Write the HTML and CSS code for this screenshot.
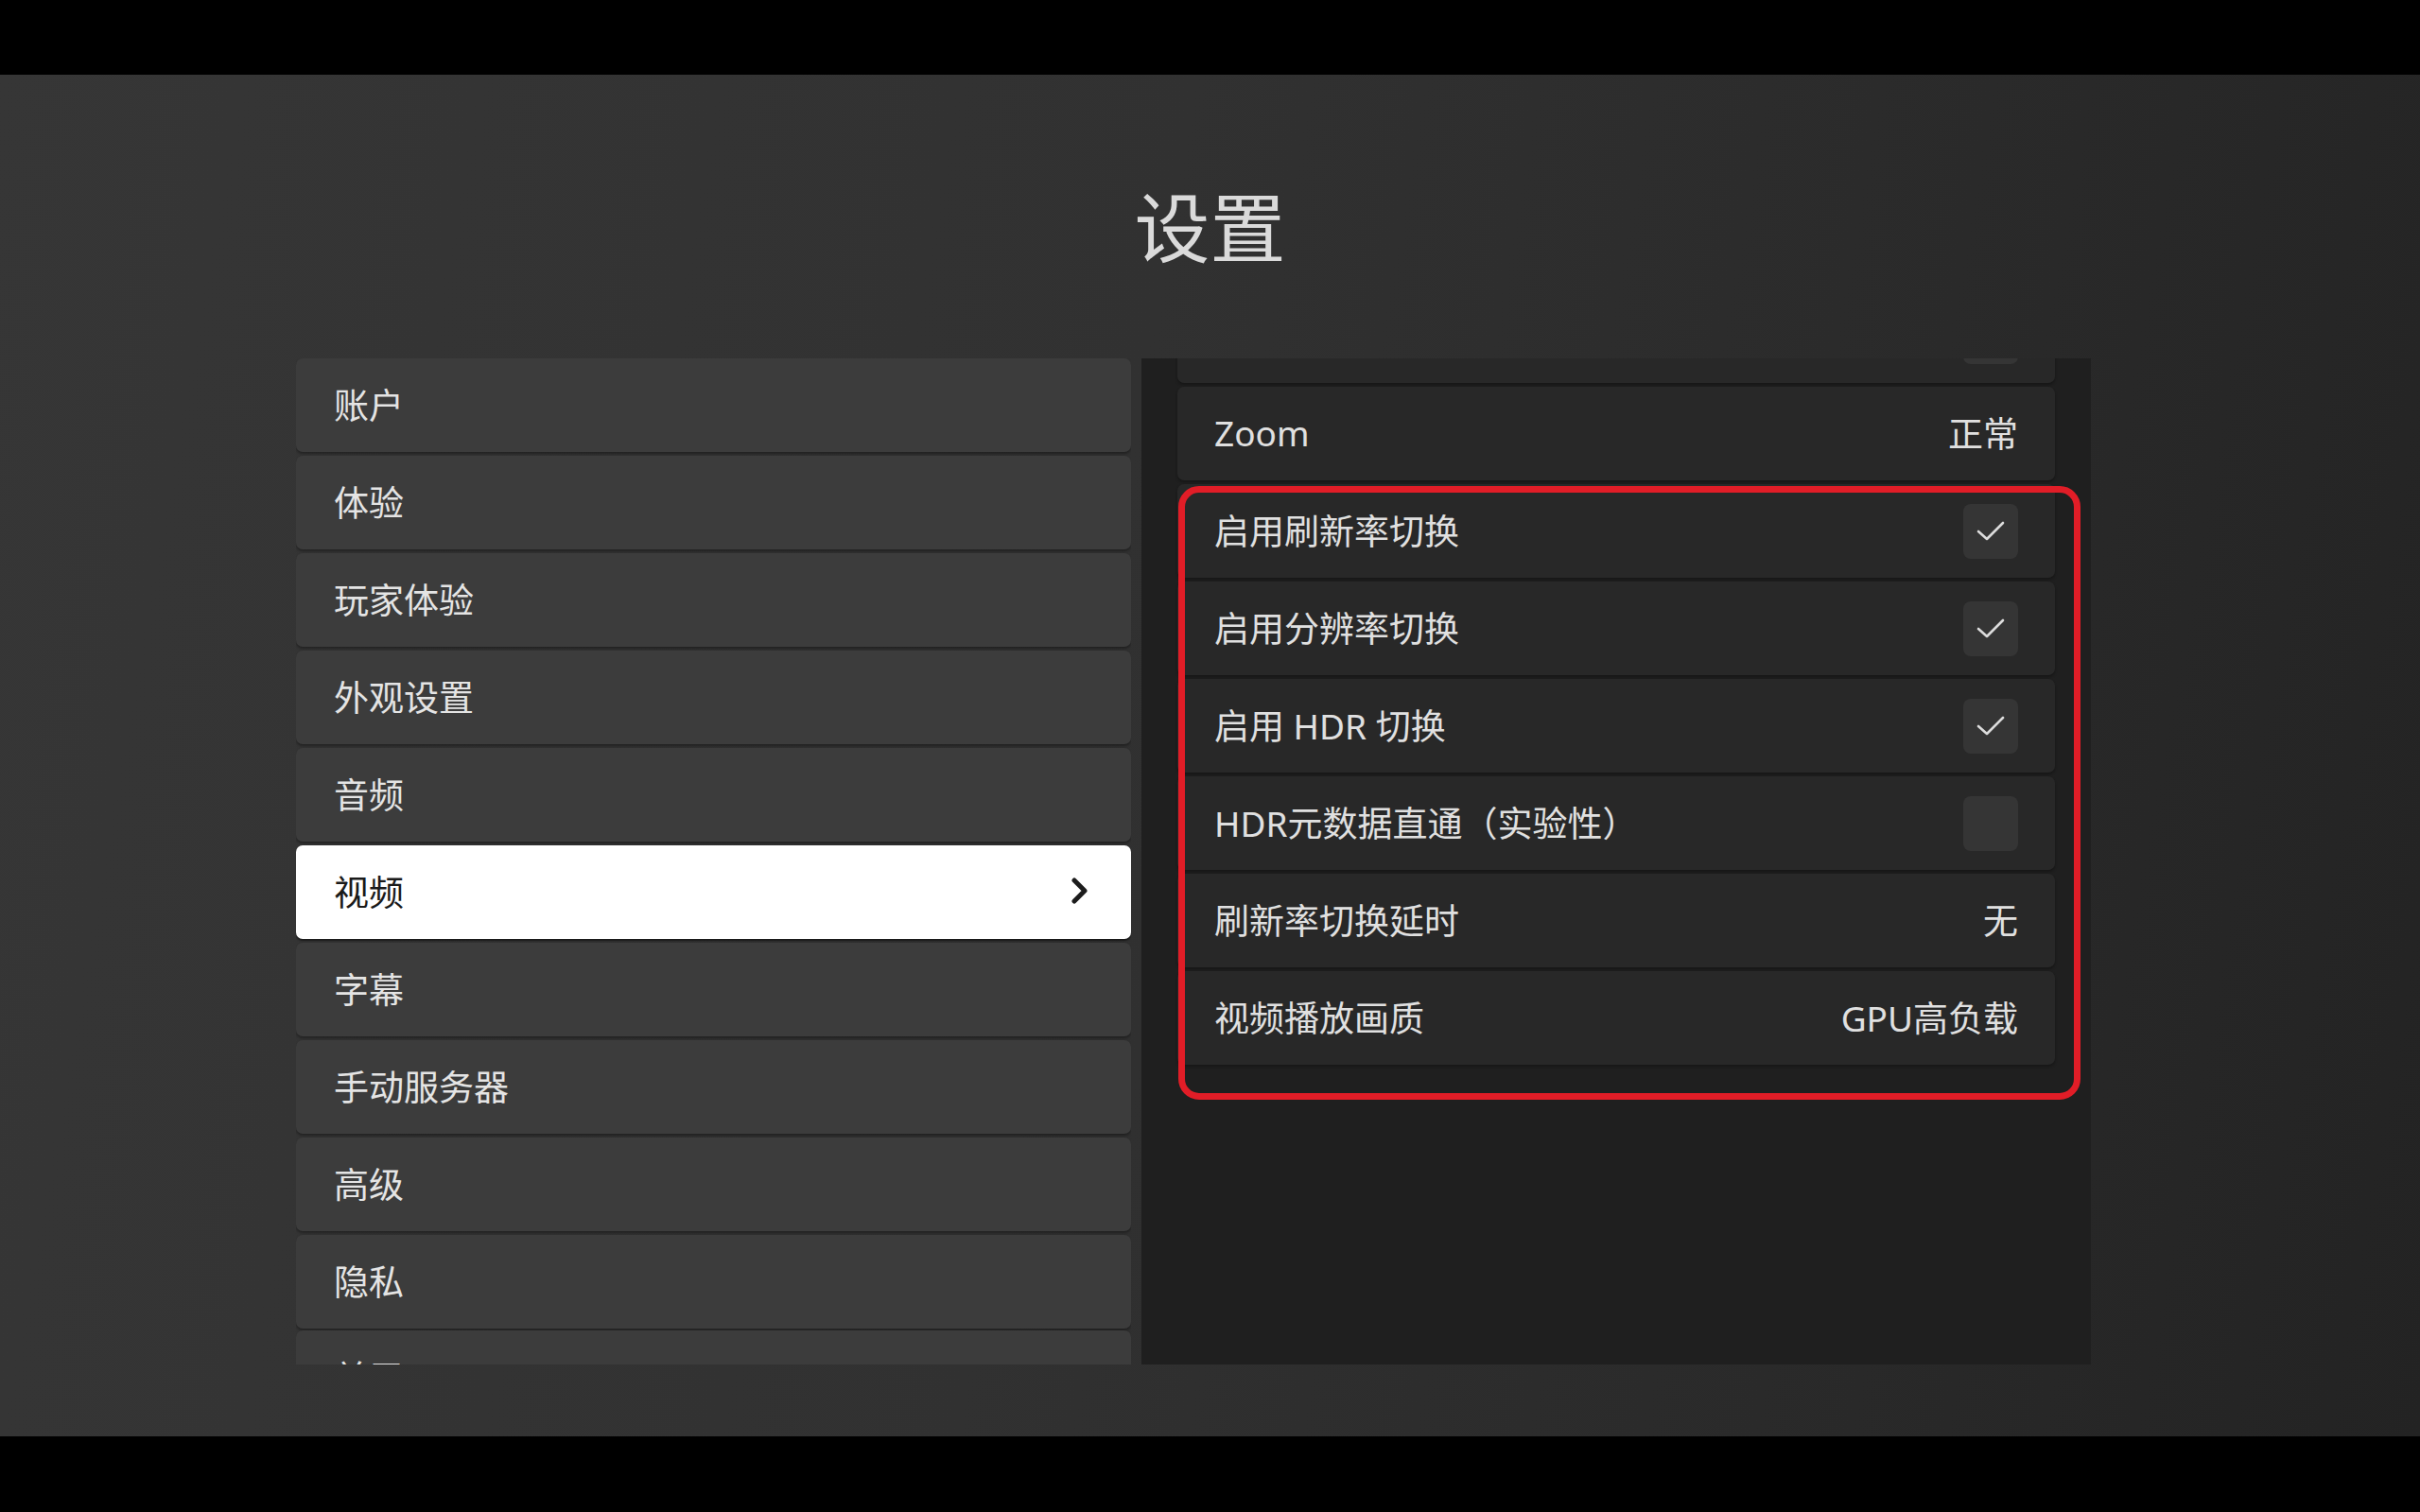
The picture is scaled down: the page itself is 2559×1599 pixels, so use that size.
FILE: index.html
```html
<!DOCTYPE html>
<html lang="zh-CN">
<head>
<meta charset="utf-8">
<title>设置</title>
<link rel="stylesheet" href="styles.css">
</head>
<body>
<div class="bar"></div>
<main class="screen">
  <h1 class="title">设置</h1>
  <div class="panels">
    <nav class="menu">
      <div class="menu-item">账户</div>
      <div class="menu-item">体验</div>
      <div class="menu-item">玩家体验</div>
      <div class="menu-item">外观设置</div>
      <div class="menu-item">音频</div>
      <div class="menu-item selected"><span>视频</span>
        <svg class="chev" width="20" height="28" viewBox="0 0 20 28"><path d="M4 3 L15 14 L4 25" fill="none" stroke="#1c1c1c" stroke-width="5" stroke-linecap="round" stroke-linejoin="round"/></svg>
      </div>
      <div class="menu-item">字幕</div>
      <div class="menu-item">手动服务器</div>
      <div class="menu-item">高级</div>
      <div class="menu-item">隐私</div>
      <div class="menu-item last">关于</div>
    </nav>
    <section class="detail">
      <div class="rows">
        <div class="row"><span>自动调整</span><span class="box"><svg class="check" width="30" height="22" viewBox="0 0 30 22"><path d="M2 11 L11 19 L28 2" fill="none" stroke="#dcdcdc" stroke-width="2.6" stroke-linecap="round" stroke-linejoin="round"/></svg></span></div>
        <div class="row"><span>Zoom</span><span class="value">正常</span></div>
        <div class="group">
          <div class="row"><span>启用刷新率切换</span><span class="box"><svg class="check" width="30" height="22" viewBox="0 0 30 22"><path d="M2 11 L11 19 L28 2" fill="none" stroke="#dcdcdc" stroke-width="2.6" stroke-linecap="round" stroke-linejoin="round"/></svg></span></div>
          <div class="row"><span>启用分辨率切换</span><span class="box"><svg class="check" width="30" height="22" viewBox="0 0 30 22"><path d="M2 11 L11 19 L28 2" fill="none" stroke="#dcdcdc" stroke-width="2.6" stroke-linecap="round" stroke-linejoin="round"/></svg></span></div>
          <div class="row"><span>启用 HDR 切换</span><span class="box"><svg class="check" width="30" height="22" viewBox="0 0 30 22"><path d="M2 11 L11 19 L28 2" fill="none" stroke="#dcdcdc" stroke-width="2.6" stroke-linecap="round" stroke-linejoin="round"/></svg></span></div>
          <div class="row"><span>HDR元数据直通（实验性）</span><span class="box"></span></div>
          <div class="row"><span>刷新率切换延时</span><span class="value">无</span></div>
          <div class="row"><span>视频播放画质</span><span class="value">GPU高负载</span></div>
        </div>
      </div>
    </section>
  </div>
</main>
<div class="bar bottom"></div>
</body>
</html>
```
FILE: styles.css
```css
html, body {
  margin: 0;
  padding: 0;
  background: #000;
}
body {
  width: 2559px;
  height: 1599px;
  overflow: hidden;
  display: flex;
  flex-direction: column;
  font-family: "Noto Sans", "Noto Sans CJK SC", sans-serif;
}
.bar {
  height: 79px;
  background: #000;
  flex: none;
}
.bar.bottom {
  height: 80px;
}
.screen {
  height: 1440px;
  flex: none;
  background: linear-gradient(100deg, #363636 0%, #313131 45%, #2a2a2a 75%, #232323 100%);
  padding-top: 117px;
  box-sizing: border-box;
}
.title {
  margin: 0 0 103px 0;
  height: 80px;
  line-height: 80px;
  font-size: 80px;
  font-weight: 400;
  text-align: center;
  color: #dadada;
  font-family: "Noto Sans CJK SC", sans-serif;
}
.panels {
  margin-left: 313px;
  display: grid;
  grid-template-columns: 883px 1004px;
  column-gap: 11px;
  height: 1064px;
  overflow: hidden;
}
.menu {
  display: flex;
  flex-direction: column;
  gap: 4px;
  overflow: hidden;
}
.menu-item {
  flex: none;
  height: 99px;
  box-sizing: border-box;
  padding: 0 40px 3px 40px;
  display: flex;
  align-items: center;
  justify-content: space-between;
  background: #3c3c3c;
  border-radius: 7px;
  box-shadow: 0 2px 3px rgba(0, 0, 0, 0.35);
  color: #e4e4e4;
  font-size: 37px;
}
.menu-item.last {
  margin-top: -2px;
}
.menu-item.selected {
  background: #ffffff;
  color: #1a1a1a;
  box-shadow: 0 2px 2px rgba(0, 0, 0, 0.5);
}
.chev {
  margin-right: 4px;
}
.detail {
  background: #1f1f1f;
  overflow: hidden;
  padding: 0 38px;
}
.rows {
  margin-top: -73px;
  display: flex;
  flex-direction: column;
  gap: 4px;
}
.group {
  position: relative;
  display: flex;
  flex-direction: column;
  gap: 4px;
}
.group::after {
  content: "";
  position: absolute;
  top: 2px;
  left: 1px;
  right: -27px;
  bottom: -37px;
  border: 7px solid #e11d27;
  border-radius: 22px;
  pointer-events: none;
}
.row {
  flex: none;
  height: 99px;
  box-sizing: border-box;
  padding: 0 39px 3px 39px;
  display: flex;
  align-items: center;
  justify-content: space-between;
  background: #282828;
  border-radius: 7px;
  box-shadow: 0 2px 3px rgba(0, 0, 0, 0.3);
  color: #e0e0e0;
  font-size: 37px;
}
.value {
  color: #e0e0e0;
}
.box {
  width: 58px;
  height: 58px;
  margin-top: 3px;
  border-radius: 8px;
  background: #353535;
  display: flex;
  align-items: center;
  justify-content: center;
}
```
